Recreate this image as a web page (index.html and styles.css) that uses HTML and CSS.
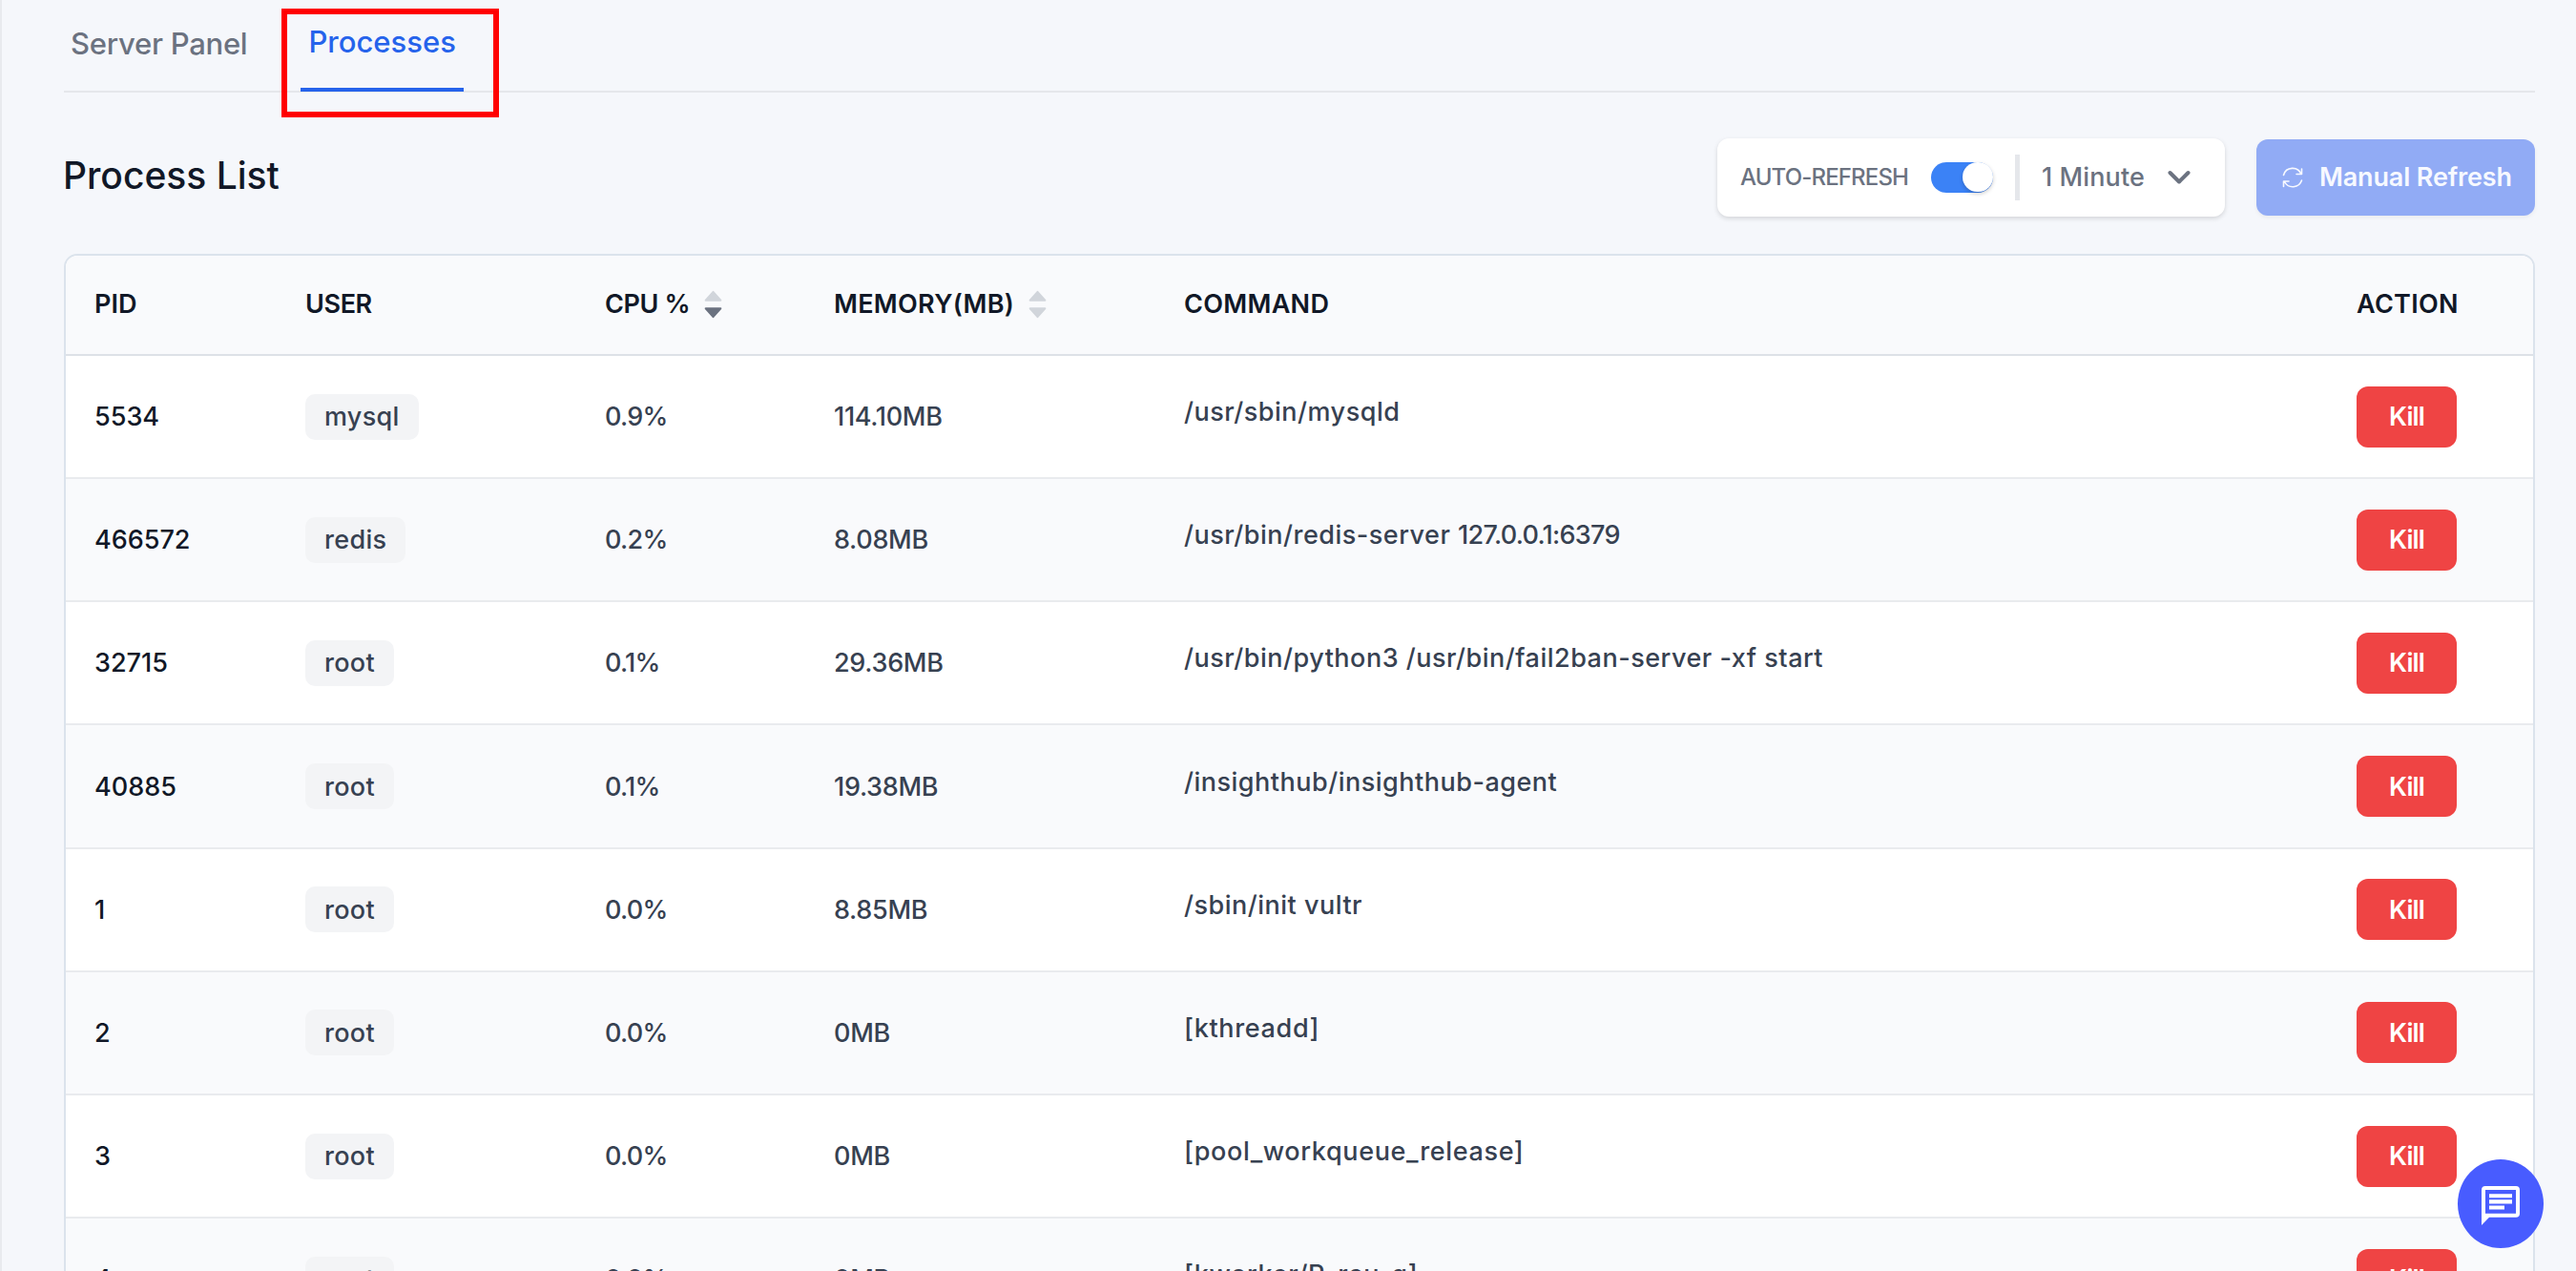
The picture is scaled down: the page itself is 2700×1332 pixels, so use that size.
FILE: index.html
```
<!DOCTYPE html>
<html lang="en">
<head>
    <meta charset="UTF-8">
    <meta name="viewport" content="width=device-width, initial-scale=1.0">
    <title>Processes</title>
    <link rel="stylesheet" href="styles.css">
</head>
<body>

    <div class="page">
        <nav class="tabs">
            <a class="tab">Server Panel</a>
            <a class="tab active">Processes</a>
            <div class="highlight"></div>
        </nav>

        <div class="toolbar">
            <h1 class="title">Process List</h1>
            <div class="refresh-box">
                <span class="refresh-label">AUTO-REFRESH</span>
                <span class="toggle"><span class="knob"></span></span>
                <span class="divider"></span>
                <span class="interval">1 Minute</span>
                <svg class="chevron" width="26" height="18" viewBox="0 0 26 18" fill="none" stroke="#6b7280" stroke-width="4" stroke-linecap="round" stroke-linejoin="round"><path d="M3.500 4l9.500 9.500L22.500 4"/></svg>
            </div>
            <button class="manual">
                <svg class="refresh-icon" width="22" height="24" viewBox="0 0 22 24" fill="none" stroke="#f7f9ff" stroke-width="1.600" stroke-linecap="round" stroke-linejoin="round"><path d="M1.500 9.500a9.800 9.800 0 0 1 18.500-1M20.500 3v5.500h-5.500M20.500 15a9.800 9.800 0 0 1-18 1.500M1.500 21.500v-5.500h5.500"/></svg>
                <span class="manual-text">Manual Refresh</span>
            </button>
        </div>

        <div class="table">
            <div class="row head">
                <div><span>PID</span></div>
                <div><span class="h-narrow">USER</span></div>
                <div><span class="h-narrow">CPU %</span>
                    <svg class="sort" width="19" height="30" viewBox="0 0 20 30"><path d="M9 .8q1-1.600 2 0l8 9q1 1.700-1 1.700H2q-2 0-1-1.700z" fill="#d1d5db"/><path d="M9 29.200q1 1.600 2 0l8-9q1-1.700-1-1.700H2q-2 0-1 1.700z" fill="#6b7280"/></svg>
                </div>
                <div><span class="h-wide">MEMORY(MB)</span>
                    <svg class="sort" width="19" height="30" viewBox="0 0 20 30"><path d="M9 .8q1-1.600 2 0l8 9q1 1.700-1 1.700H2q-2 0-1-1.700z" fill="#d1d5db"/><path d="M9 29.200q1 1.600 2 0l8-9q1-1.700-1-1.700H2q-2 0-1 1.700z" fill="#d1d5db"/></svg>
                </div>
                <div><span class="h-wide">COMMAND</span></div>
                <div><span class="h-wide">ACTION</span></div>
            </div>
            <div id="rows"></div>
        </div>
    </div>

    <button class="chat">
        <svg width="40" height="41" viewBox="2 2 20 20" preserveAspectRatio="none" fill="#fff"><path fill-rule="evenodd" d="M4 2h16a2 2 0 0 1 2 2v12a2 2 0 0 1-2 2H6l-4 4V4a2 2 0 0 1 2-2zm0 2v12h16V4z"/><path d="M6 6h12v2H6zm0 3h12v2H6zm0 3h8v2H6z"/></svg>
    </button>

    <script src="script.js"></script>
</body>
</html>
```
FILE: styles.css
```
* {
    box-sizing: border-box;
}
html {
    overflow: hidden;
}
body {
    margin: 0;
    height: 1332px;
    overflow: hidden;
    background-color: #f5f7fb;
    font-family: Inter, "Liberation Sans", sans-serif;
    font-size: 27px;
    font-weight: 500;
    color: #374151;
    border-left: 2px solid #e8eaee;
}
span {
    white-space: nowrap;
}
.page {
    height: 1332px;
    padding: 0 43px 0 65px;
    overflow: hidden;
}
.tabs {
    position: relative;
    display: flex;
    height: 97px;
    border-bottom: 2px solid #e5e7eb;
}
.tab {
    height: 96px;
    padding: 27px 8px 0 7px;
    margin-right: 48px;
    font-size: 31px;
    line-height: 38px;
    letter-spacing: -0.25px;
    color: #6b7280;
}
.tab.active {
    padding-top: 25px;
    padding-left: 8px;
    border-bottom: 4px solid #2563eb;
    letter-spacing: 0;
    color: #2563eb;
}
.highlight {
    position: absolute;
    left: 228px;
    top: 9px;
    width: 228px;
    height: 114px;
    border: 6px solid #ff0000;
}
.toolbar {
    display: flex;
    align-items: center;
    height: 169px;
    padding-top: 8px;
}
.title {
    flex: 1;
    margin: 0 0 4px -1px;
    font-size: 39px;
    font-weight: 500;
    color: #111827;
}
.refresh-box {
    display: flex;
    align-items: center;
    width: 532px;
    height: 82px;
    padding-left: 24px;
    margin-right: 33px;
    border-radius: 12px;
    background-color: #fff;
    color: #6b7280;
    box-shadow: 0 2px 5px rgba(0, 0, 0, 0.14);
}
.refresh-label {
    width: 200px;
    font-size: 24px;
    letter-spacing: -0.85px;
}
.toggle {
    display: flex;
    justify-content: flex-end;
    width: 65px;
    height: 32px;
    padding: 0.5px;
    border-radius: 16px;
    background-color: #3b82f6;
}
.knob {
    width: 32px;
    height: 31px;
    border-radius: 16px;
    background-color: #fff;
    box-shadow: 0 2px 4px rgba(0, 0, 0, 0.2);
}
.divider {
    width: 5px;
    height: 48px;
    margin: 0 23px;
    background-color: #e5e7eb;
}
.interval {
    width: 131px;
    letter-spacing: 0.1px;
}
.manual {
    display: flex;
    align-items: center;
    width: 292px;
    height: 80px;
    padding: 0 0 0 27px;
    border: none;
    border-radius: 12px;
    background-color: #91abf5;
    font-family: inherit;
    font-size: 27px;
    font-weight: 600;
    letter-spacing: -0.15px;
    color: #f7f9ff;
    box-shadow: 0 2px 4px rgba(0, 0, 0, 0.05);
}
.refresh-icon {
    margin-right: 17px;
}
.table {
    border: 2px solid #dbe3ec;
    border-radius: 14px 14px 0 0;
    background-color: #fff;
    overflow: hidden;
}
.row {
    display: grid;
    grid-template-columns: 221px 314px 240px 367px 1229px 1fr;
    align-items: center;
    height: 129.17px;
    padding-left: 30px;
    border-bottom: 2px solid #e9ebee;
}
.row.head {
    height: 105px;
    padding-bottom: 2px;
    border-bottom-color: #dde1e7;
    background-color: #f9fafc;
    font-weight: 600;
    color: #111827;
}
.row.head div {
    display: flex;
    align-items: center;
}
.row.even {
    background-color: #f9fafc;
}
.h-narrow {
    letter-spacing: -0.4px;
}
.h-wide {
    letter-spacing: 0.3px;
}
.sort {
    margin-left: 15px;
}
.pid {
    color: #111827;
}
.user {
    display: inline-flex;
    align-items: center;
    height: 48px;
    padding: 0 20px;
    border-radius: 10px;
    background-color: #f3f4f6;
    letter-spacing: 0.3px;
}
.cpu {
    letter-spacing: -0.7px;
}
.mem {
    letter-spacing: -0.3px;
}
.cmd {
    display: block;
    padding-bottom: 10px;
    letter-spacing: 0.5px;
}
.cmd.kernel {
    letter-spacing: 0.65px;
}
.address {
    letter-spacing: -0.7px;
}
.kill {
    width: 105px;
    height: 64px;
    padding: 0;
    border: none;
    border-radius: 12px;
    background-color: #ef4444;
    font-family: inherit;
    font-size: 27px;
    font-weight: 600;
    letter-spacing: -0.9px;
    color: #fff;
}
.chat {
    position: absolute;
    left: 2576px;
    top: 1215px;
    display: flex;
    align-items: center;
    justify-content: center;
    width: 90px;
    height: 93px;
    padding: 4px 0 0;
    border: none;
    border-radius: 50%;
    background-color: #485cff;
}
```
FILE: script.js
```
// pid, user, cpu, memory, command
const processes = [
    ["5534", "mysql", "0.9%", "114.10MB", "/usr/sbin/mysqld"],
    ["466572", "redis", "0.2%", "8.08MB", "/usr/bin/redis-server <span class='address'>127.0.0.1:6379</span>"],
    ["32715", "root", "0.1%", "29.36MB", "/usr/bin/python3 /usr/bin/fail2ban-server -xf start"],
    ["40885", "root", "0.1%", "19.38MB", "/insighthub/insighthub-agent"],
    ["1", "root", "0.0%", "8.85MB", "/sbin/init vultr"],
    ["2", "root", "0.0%", "0MB", "[kthreadd]"],
    ["3", "root", "0.0%", "0MB", "[pool_workqueue_release]"],
    ["4", "root", "0.0%", "0MB", "[kworker/R-rcu_g]"]
];

document.getElementById("rows").innerHTML = processes.map((p, i) => `
    <div class="row ${i % 2 ? "even" : ""}">
        <div><span class="pid">${p[0]}</span></div>
        <div><span class="user">${p[1]}</span></div>
        <div><span class="cpu">${p[2]}</span></div>
        <div><span class="mem">${p[3]}</span></div>
        <div><span class="cmd ${p[4][0] === "[" ? "kernel" : ""}">${p[4]}</span></div>
        <div><button class="kill">Kill</button></div>
    </div>`).join("");
```
